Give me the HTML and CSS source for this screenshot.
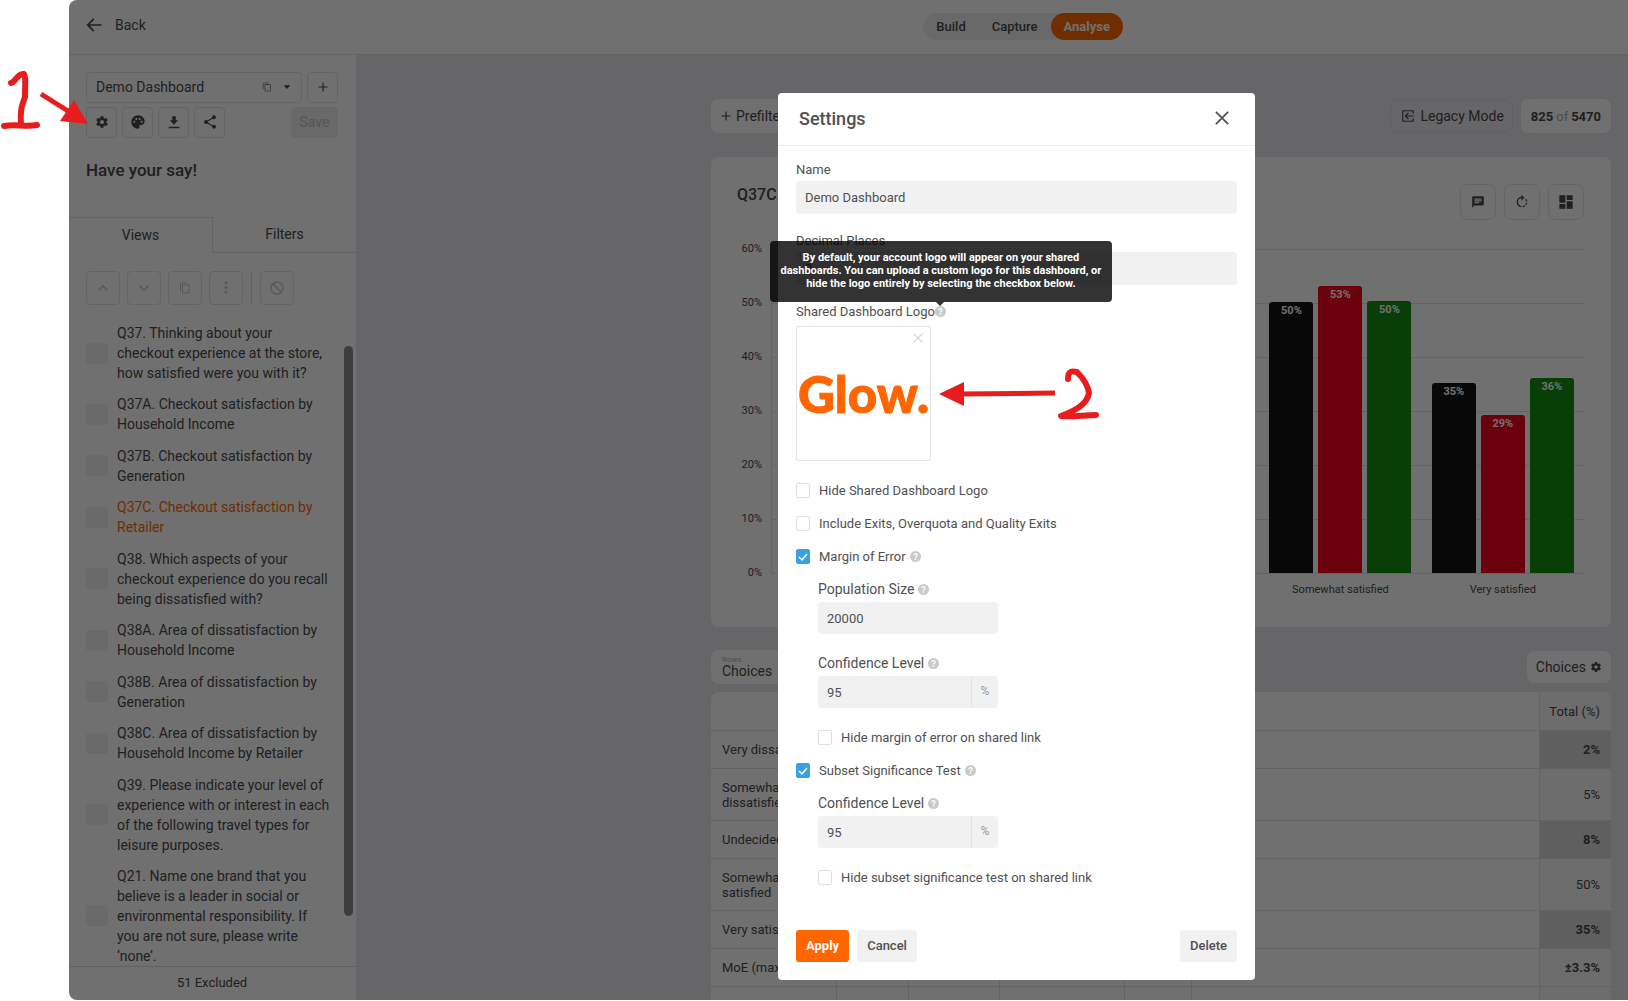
FILE: index.html
```html
<!DOCTYPE html>
<html lang="en">
<head>
    <meta charset="UTF-8">
    <meta name="viewport" content="width=device-width, initial-scale=1.0">
    <title>Demo Dashboard - Settings</title>
    <link rel="stylesheet" href="styles.css">
</head>
<body>
    <!-- ICONS -->
    <svg class="sprite" aria-hidden="true">
        <symbol id="i-gear" viewBox="0 0 24 24"><path fill-rule="evenodd" d="M19.43 12.98c.04-.32.07-.64.07-.98s-.03-.66-.07-.98l2.11-1.65c.19-.15.24-.42.12-.64l-2-3.46c-.12-.22-.39-.3-.61-.22l-2.49 1c-.52-.4-1.08-.73-1.69-.98l-.38-2.65C14.46 2.18 14.25 2 14 2h-4c-.25 0-.46.18-.49.42l-.38 2.65c-.61.25-1.17.59-1.69.98l-2.49-1c-.23-.09-.49 0-.61.22l-2 3.46c-.13.22-.07.49.12.64l2.11 1.65c-.04.32-.07.65-.07.98s.03.66.07.98l-2.11 1.65c-.19.15-.24.42-.12.64l2 3.46c.12.22.39.3.61.22l2.49-1c.52.4 1.08.73 1.69.98l.38 2.65c.03.24.24.42.49.42h4c.25 0 .46-.18.49-.42l.38-2.65c.61-.25 1.17-.59 1.69-.98l2.49 1c.23.09.49 0 .61-.22l2-3.46c.12-.22.07-.49-.12-.64l-2.11-1.65zM12 15.5c-1.93 0-3.5-1.57-3.5-3.5s1.57-3.5 3.5-3.5 3.5 1.57 3.5 3.5-1.57 3.5-3.5 3.5z"/></symbol>
        <symbol id="i-palette" viewBox="0 0 24 24"><path d="M12 2C6.49 2 2 6.49 2 12s4.49 10 10 10c1.38 0 2.5-1.12 2.5-2.5 0-.61-.23-1.2-.64-1.67-.08-.1-.13-.21-.13-.33 0-.28.22-.5.5-.5H16c3.31 0 6-2.69 6-6 0-4.96-4.49-9-10-9zm5.5 11c-.83 0-1.5-.67-1.5-1.5s.67-1.5 1.5-1.5 1.5.67 1.5 1.5-.67 1.5-1.5 1.5zm-3-4c-.83 0-1.5-.67-1.5-1.5S13.67 6 14.5 6s1.5.67 1.5 1.5S15.33 9 14.5 9zM5 11.5c0-.83.67-1.5 1.5-1.5s1.5.67 1.5 1.5S7.33 13 6.5 13 5 12.33 5 11.5zm6-4c0 .83-.67 1.5-1.5 1.5S8 8.33 8 7.5 8.67 6 9.5 6s1.5.67 1.5 1.5z"/></symbol>
        <symbol id="i-download" viewBox="0 0 24 24"><path d="M19 9h-4V2H9v7H5l7 7.5zM3 20h18v2.5H3z"/></symbol>
        <symbol id="i-share" viewBox="0 0 24 24"><path d="M18 16.08c-.76 0-1.44.3-1.96.77L8.91 12.7c.05-.23.09-.46.09-.7s-.04-.47-.09-.7l7.05-4.11c.54.5 1.25.81 2.04.81 1.66 0 3-1.34 3-3s-1.34-3-3-3-3 1.34-3 3c0 .24.04.47.09.7L8.04 9.81C7.5 9.31 6.79 9 6 9c-1.66 0-3 1.34-3 3s1.34 3 3 3c.79 0 1.5-.31 2.04-.81l7.12 4.16c-.05.21-.08.43-.08.65 0 1.61 1.31 2.92 2.92 2.92s2.92-1.31 2.92-2.92-1.31-2.92-2.92-2.92z"/></symbol>
        <symbol id="i-copy" viewBox="0 0 24 24"><path d="M16 1H4c-1.1 0-2 .9-2 2v14h2V3h12V1zm3 4H8c-1.1 0-2 .9-2 2v14c0 1.1.9 2 2 2h11c1.1 0 2-.9 2-2V7c0-1.1-.9-2-2-2zm0 16H8V7h11v14z"/></symbol>
        <symbol id="i-caret" viewBox="0 0 24 24"><path d="M2 7l10 11L22 7z"/></symbol>
        <symbol id="i-plus" viewBox="0 0 24 24"><path d="M21 13.2h-7.8V21h-2.4v-7.8H3v-2.4h7.8V3h2.4v7.8H21z"/></symbol>
        <symbol id="i-back" viewBox="0 0 24 24"><path d="M21 11H6.83l5.59-5.59L11 4l-8 8 8 8 1.41-1.41L6.83 13H21v-2z"/></symbol>
        <symbol id="i-up" viewBox="0 0 24 24"><path d="M12 8l-6 6 1.41 1.41L12 10.83l4.59 4.58L18 14z"/></symbol>
        <symbol id="i-down" viewBox="0 0 24 24"><path d="M16.59 8.59L12 13.17 7.41 8.59 6 10l6 6 6-6z"/></symbol>
        <symbol id="i-more" viewBox="0 0 24 24"><circle cx="12" cy="3" r="2.5"/><circle cx="12" cy="11" r="2.5"/><circle cx="12" cy="19" r="2.5"/></symbol>
        <symbol id="i-block" viewBox="0 0 24 24"><path d="M12 2C6.48 2 2 6.48 2 12s4.48 10 10 10 10-4.48 10-10S17.52 2 12 2zm0 18c-4.42 0-8-3.58-8-8 0-1.85.63-3.55 1.69-4.9L16.9 18.31C15.55 19.37 13.85 20 12 20zm6.31-3.1L7.1 5.69C8.45 4.63 10.15 4 12 4c4.42 0 8 3.58 8 8 0 1.85-.63 3.55-1.69 4.9z"/></symbol>
        <symbol id="i-exit" viewBox="0 0 24 24"><path d="M13.5 7.5L12 6l-6 6 6 6 1.5-1.5L10.2 13H22v-2H10.2zM2 2v20h20v-6h-2v4H4V4h16v4h2V2z"/></symbol>
        <symbol id="i-chat" viewBox="0 0 24 24"><path d="M20 2H4c-1.1 0-2 .9-2 2v18l4-4h14c1.1 0 2-.9 2-2V4c0-1.1-.9-2-2-2zM6 9h12v2H6V9zm8 5H6v-2h8v2zm4-6H6V6h12v2z"/></symbol>
        <symbol id="i-rotate" viewBox="0 0 24 24"><path d="M15.55 5.55L11 1v3.07C7.06 4.56 4 7.92 4 12s3.05 7.44 7 7.93v-2.02c-2.84-.48-5-2.94-5-5.91s2.16-5.43 5-5.91V10l4.55-4.45zM19.93 11c-.17-1.39-.72-2.73-1.62-3.89l-1.42 1.42c.54.75.88 1.6 1.02 2.47h2.02zM13 17.9v2.02c1.39-.17 2.74-.71 3.9-1.61l-1.44-1.44c-.75.54-1.59.89-2.46 1.03zm3.89-2.42l1.42 1.41c.9-1.16 1.45-2.5 1.62-3.89h-2.02c-.14.87-.48 1.72-1.02 2.48z"/></symbol>
        <symbol id="i-dash" viewBox="0 0 24 24"><path d="M2 2h9v11H2zM13 2h9v7h-9zM2 15h9v7H2zM13 11h9v11h-9z"/></symbol>
        <symbol id="i-close" viewBox="0 0 16 16"><path d="M1 1l14 14M15 1L1 15" fill="none" stroke="currentColor" stroke-width="2"/></symbol>
        <symbol id="i-help" viewBox="0 0 12 12"><circle cx="6" cy="6" r="6"/><path d="M4.3 4.6C4.3 2.3 7.7 2.4 7.7 4.5 7.7 5.6 6 5.7 6 7.2" fill="none" stroke="#fff" stroke-width="1.4"/><rect x="5.2" y="8" width="1.6" height="1.5" fill="#fff"/></symbol>
    </svg>

    <div class="app">
        <header class="topbar">
            <a href="#" class="back"><svg class="icon i20"><use href="#i-back"/></svg>Back</a>
            <nav class="steps">
                <a href="#">Build</a>
                <a href="#">Capture</a>
                <a href="#" class="active">Analyse</a>
            </nav>
        </header>

        <div class="columns">
            <!-- SIDEBAR -->
            <aside class="sidebar">
                <div class="picker">
                    <button type="button" class="box picker-name"><span>Demo Dashboard</span><svg class="icon i10 faint"><use href="#i-copy"/></svg><svg class="icon i8"><use href="#i-caret"/></svg></button>
                    <button type="button" class="box square" aria-label="Add dashboard"><svg class="icon i12"><use href="#i-plus"/></svg></button>
                </div>
                <div class="tools">
                    <button type="button" class="box square" aria-label="Settings"><svg class="icon i14"><use href="#i-gear"/></svg></button>
                    <button type="button" class="box square" aria-label="Theme"><svg class="icon i16"><use href="#i-palette"/></svg></button>
                    <button type="button" class="box square" aria-label="Download"><svg class="icon i14"><use href="#i-download"/></svg></button>
                    <button type="button" class="box square" aria-label="Share"><svg class="icon i16"><use href="#i-share"/></svg></button>
                    <button type="button" class="save" disabled>Save</button>
                </div>
                <h2 class="survey">Have your say!</h2>
                <div class="tabs">
                    <button type="button" class="tab on">Views</button>
                    <button type="button" class="tab">Filters</button>
                </div>
                <div class="actions">
                    <button type="button" class="box" aria-label="Move up" disabled><svg class="icon i20"><use href="#i-up"/></svg></button>
                    <button type="button" class="box" aria-label="Move down" disabled><svg class="icon i20"><use href="#i-down"/></svg></button>
                    <button type="button" class="box" aria-label="Copy" disabled><svg class="icon i12"><use href="#i-copy"/></svg></button>
                    <button type="button" class="box" aria-label="More" disabled><svg class="icon i14"><use href="#i-more"/></svg></button>
                    <span class="sep"></span>
                    <button type="button" class="box" aria-label="Exclude" disabled><svg class="icon i16"><use href="#i-block"/></svg></button>
                </div>
                <div class="views">
                    <ul>
                        <li><span class="thumb"></span><a href="#">Q37. Thinking about your checkout experience at the store, how satisfied were you with it?</a></li>
                        <li><span class="thumb"></span><a href="#">Q37A. Checkout satisfaction by Household Income</a></li>
                        <li><span class="thumb"></span><a href="#">Q37B. Checkout satisfaction by Generation</a></li>
                        <li><span class="thumb"></span><a href="#" class="current">Q37C. Checkout satisfaction by Retailer</a></li>
                        <li><span class="thumb"></span><a href="#">Q38. Which aspects of your checkout experience do you recall being dissatisfied with?</a></li>
                        <li><span class="thumb"></span><a href="#">Q38A. Area of dissatisfaction by Household Income</a></li>
                        <li><span class="thumb"></span><a href="#">Q38B. Area of dissatisfaction by Generation</a></li>
                        <li><span class="thumb"></span><a href="#">Q38C. Area of dissatisfaction by Household Income by Retailer</a></li>
                        <li><span class="thumb"></span><a href="#">Q39. Please indicate your level of experience with or interest in each of the following travel types for leisure purposes.</a></li>
                        <li><span class="thumb"></span><a href="#">Q21. Name one brand that you believe is a leader in social or environmental responsibility. If you are not sure, please write ‘none’.</a></li>
                    </ul>
                    <span class="scrollbar"></span>
                </div>
                <div class="excluded">51 Excluded</div>
            </aside>

            <!-- DASHBOARD -->
            <main class="main">
                <div class="toolbar">
                    <button type="button" class="pill"><svg class="icon i12"><use href="#i-plus"/></svg>Prefilter</button>
                    <span class="grow"></span>
                    <button type="button" class="pill outline"><svg class="icon i14"><use href="#i-exit"/></svg>Legacy Mode</button>
                    <span class="pill count"><b>825</b> of <b>5470</b></span>
                </div>

                <section class="card">
                    <div class="card-head">
                        <h3>Q37C. Checkout satisfaction by Retailer</h3>
                        <button type="button" class="box" aria-label="Comment"><svg class="icon i14"><use href="#i-chat"/></svg></button>
                        <button type="button" class="box" aria-label="Rotate"><svg class="icon i16"><use href="#i-rotate"/></svg></button>
                        <button type="button" class="box" aria-label="Layout"><svg class="icon i16"><use href="#i-dash"/></svg></button>
                    </div>
                    <div class="chart">
                        <div class="scale">
                            <span>60%</span><span>50%</span><span>40%</span><span>30%</span><span>20%</span><span>10%</span><span>0%</span>
                        </div>
                        <div class="plot">
                            <div class="group"><div class="bars"></div></div>
                            <div class="group"><div class="bars"></div></div>
                            <div class="group"><div class="bars"></div></div>
                            <div class="group">
                                <div class="bars">
                                    <div class="bar black" style="height:271px">50%</div>
                                    <div class="bar red" style="height:287px">53%</div>
                                    <div class="bar green" style="height:272px">50%</div>
                                </div>
                                <div class="cat">Somewhat satisfied</div>
                            </div>
                            <div class="group">
                                <div class="bars">
                                    <div class="bar black" style="height:190px">35%</div>
                                    <div class="bar red" style="height:158px">29%</div>
                                    <div class="bar green" style="height:195px">36%</div>
                                </div>
                                <div class="cat">Very satisfied</div>
                            </div>
                        </div>
                    </div>
                </section>

                <div class="table-bar">
                    <button type="button" class="pill rows"><small>Rows</small>Choices</button>
                    <span class="grow"></span>
                    <button type="button" class="pill choices">Choices<svg class="icon i12"><use href="#i-gear"/></svg></button>
                </div>
                <table class="results">
                    <colgroup><col class="c-name"><col class="c-a"><col class="c-b"><col class="c-c"><col class="c-d"><col><col class="c-total"></colgroup>
                    <tr class="titles"><th></th><td></td><td></td><td></td><td></td><td></td><th class="total">Total (%)</th></tr>
                    <tr><th>Very dissatisfied</th><td></td><td></td><td></td><td></td><td></td><td class="total shade">2%</td></tr>
                    <tr class="tall"><th>Somewhat dissatisfied</th><td></td><td></td><td></td><td></td><td></td><td class="total">5%</td></tr>
                    <tr><th>Undecided</th><td></td><td></td><td></td><td></td><td></td><td class="total shade">8%</td></tr>
                    <tr class="tall"><th>Somewhat satisfied</th><td></td><td></td><td></td><td></td><td></td><td class="total">50%</td></tr>
                    <tr><th>Very satisfied</th><td></td><td></td><td></td><td></td><td></td><td class="total shade">35%</td></tr>
                    <tr><th>MoE (max)</th><td></td><td></td><td></td><td></td><td></td><td class="total strong">±3.3%</td></tr>
                    <tr><th></th><td></td><td></td><td></td><td></td><td></td><td class="total"></td></tr>
                </table>
            </main>
        </div>

        <!-- SETTINGS MODAL -->
        <div class="overlay">
            <form class="modal">
                <div class="modal-head">
                    <h1>Settings</h1>
                    <button type="button" class="close" aria-label="Close"><svg class="icon i14"><use href="#i-close"/></svg></button>
                </div>
                <div class="modal-body">
                    <div class="field">
                        <label for="name">Name</label>
                        <input type="text" id="name" value="Demo Dashboard">
                    </div>
                    <div class="field">
                        <label for="decimals">Decimal Places</label>
                        <input type="text" id="decimals" value="0">
                    </div>
                    <div class="logo-label">Shared Dashboard Logo <span class="help"><svg class="icon i11"><use href="#i-help"/></svg><span class="tooltip" role="tooltip">By default, your account logo will appear on your shared dashboards. You can upload a custom logo for this dashboard, or hide the logo entirely by selecting the checkbox below.</span></span></div>
                    <div class="logo-box">
                        <span class="logo">Glow.</span>
                        <button type="button" class="remove" aria-label="Remove logo"><svg class="icon i10"><use href="#i-close"/></svg></button>
                    </div>

                    <label class="check"><input type="checkbox">Hide Shared Dashboard Logo</label>
                    <label class="check"><input type="checkbox">Include Exits, Overquota and Quality Exits</label>
                    <label class="check"><input type="checkbox" checked>Margin of Error <svg class="icon i11 help-icon"><use href="#i-help"/></svg></label>
                    <div class="sub">
                        <div class="subfield">
                            <label for="population">Population Size <svg class="icon i11 help-icon"><use href="#i-help"/></svg></label>
                            <input type="text" id="population" value="20000">
                        </div>
                        <div class="subfield">
                            <label for="moe">Confidence Level <svg class="icon i11 help-icon"><use href="#i-help"/></svg></label>
                            <div class="percent"><input type="text" id="moe" value="95"><span>%</span></div>
                        </div>
                        <label class="check"><input type="checkbox">Hide margin of error on shared link</label>
                    </div>
                    <label class="check"><input type="checkbox" checked>Subset Significance Test <svg class="icon i11 help-icon"><use href="#i-help"/></svg></label>
                    <div class="sub">
                        <div class="subfield">
                            <label for="subset">Confidence Level <svg class="icon i11 help-icon"><use href="#i-help"/></svg></label>
                            <div class="percent"><input type="text" id="subset" value="95"><span>%</span></div>
                        </div>
                        <label class="check"><input type="checkbox">Hide subset significance test on shared link</label>
                    </div>

                    <div class="buttons">
                        <button type="button" class="btn primary">Apply</button>
                        <button type="button" class="btn">Cancel</button>
                        <span class="grow"></span>
                        <button type="button" class="btn">Delete</button>
                    </div>
                </div>
            </form>
        </div>
    </div>

    <!-- hand drawn marks -->
    <svg class="mark mark-one" width="92" height="66" viewBox="0 68 92 66" role="img" aria-label="Step 1">
        <path class="pen" d="M11 83C16 82 17 73 24 74C26 76 25 84 25 97C22 105 20 110 21 124M4 126C15 124 26 127 37 125"/>
        <path class="shaft" d="M41 94L68 111"/>
        <path class="head" d="M88 124L74 100L60 121z"/>
    </svg>
    <svg class="mark mark-two" width="162" height="56" viewBox="938 366 162 56" role="img" aria-label="Step 2">
        <path class="pen" d="M1068 379C1068 370 1073 371 1077 372C1083 378 1088 386 1089 393C1087 405 1074 411 1061 416C1073 417 1084 415 1096 415"/>
        <path class="shaft" d="M1055 393L960 394"/>
        <path class="head" d="M939 394L964 382V406z"/>
    </svg>
</body>
</html>
```
FILE: styles.css
```css
* {
    box-sizing: border-box;
}
body {
    margin: 0;
    position: relative;
    background-color: white;
    color: #4a4a4d;
    font-family: Roboto, "Liberation Sans", sans-serif;
    font-size: 14px;
    overflow: hidden;
}
button, input {
    font-family: inherit;
    font-size: inherit;
    color: inherit;
}
button {
    display: flex;
    align-items: center;
    justify-content: center;
    padding: 0;
    border: 0;
    background: none;
}
a {
    color: inherit;
    text-decoration: none;
}
h1, h2, h3, ul {
    margin: 0;
    padding: 0;
}
h1, h2, h3 {
    font-weight: 500;
}
.sprite {
    position: absolute;
    width: 0;
    height: 0;
}
.icon {
    fill: currentColor;
    flex: none;
    width: 14px;
    height: 14px;
}
.i8 { width: 8px; height: 8px; }
.i10 { width: 10px; height: 10px; }
.i11 { width: 11px; height: 11px; }
.i12 { width: 12px; height: 12px; }
.i16 { width: 16px; height: 16px; }
.i20 { width: 20px; height: 20px; }
.grow {
    flex: 1;
}
.faint {
    opacity: .7;
}
.app {
    display: flex;
    flex-direction: column;
    position: relative;
    height: calc(100vh - 1px);
    margin-left: 69px;
    border-radius: 8px 0 0 8px;
    overflow: hidden;
    background-color: #e9e9ec;
}

/* top bar */
.topbar {
    display: flex;
    align-items: center;
    justify-content: space-between;
    flex: none;
    height: 55px;
    padding: 0 505px 2px 15px;
    background-color: white;
    border-bottom: 1px solid #e2e2e4;
}
.back {
    display: flex;
    align-items: center;
    gap: 11px;
    padding-bottom: 2px;
}
.steps {
    display: flex;
    background-color: #f0f0f0;
    border-radius: 14px;
    font-size: 13px;
    font-weight: 500;
    line-height: 27px;
}
.steps a {
    padding: 0 13px;
}
.steps .active {
    background-color: #ff6600;
    border-radius: 14px;
    color: white;
    font-weight: 700;
}
.columns {
    display: flex;
    flex: 1;
    min-height: 0;
}

/* sidebar */
.sidebar {
    display: flex;
    flex-direction: column;
    flex: none;
    width: 287px;
    padding-top: 17px;
    background-color: white;
}
.box {
    border: 1px solid #e4e4e6;
    border-radius: 4px;
}
.square {
    width: 31px;
    height: 31px;
    padding-bottom: 1px;
}
.picker, .tools {
    display: flex;
    gap: 5px;
    padding: 0 18px 0 17px;
}
.picker-name {
    flex: 1;
    height: 31px;
    padding: 0 10px 2px 9px;
    gap: 11px;
}
.picker-name span {
    flex: 1;
    text-align: left;
}
.tools {
    margin-top: 4px;
}
.save {
    width: 47px;
    margin-left: auto;
    padding-bottom: 2px;
    border-radius: 4px;
    background-color: #f0f0f0;
    color: #c2c2c2;
}
.survey {
    margin-top: 22px;
    padding-left: 17px;
    font-size: 17px;
    line-height: 20px;
}
.tabs {
    display: flex;
    margin-top: 37px;
}
.tab {
    flex: 1;
    height: 36px;
    padding-bottom: 2px;
    border-bottom: 1px solid #e2e2e4;
}
.tab.on {
    border-top: 1px solid #e2e2e4;
    border-right: 1px solid #e2e2e4;
    border-bottom: 0;
}
.actions {
    display: flex;
    gap: 7px;
    margin: 18px 17px 0;
    color: #c8c8c8;
}
.actions .box {
    width: 34px;
    height: 34px;
}
.sep {
    width: 1px;
    margin: 0 1px;
    background-color: #dcdcde;
}
.actions button:disabled {
    color: inherit;
}
.views {
    position: relative;
    flex: 1;
    min-height: 0;
    padding: 18px 24px 0 17px;
    overflow: hidden;
}
.views ul {
    display: flex;
    flex-direction: column;
    justify-content: space-between;
    height: 100%;
}
.views li {
    display: flex;
    align-items: center;
    gap: 9px;
    line-height: 20px;
}
.thumb {
    flex: none;
    width: 22px;
    height: 21px;
    border-radius: 3px;
    background-color: #f1f1f1;
}
.current {
    color: #ff6600;
}
.scrollbar {
    position: absolute;
    top: 41px;
    right: 3px;
    bottom: 50px;
    width: 9px;
    border-radius: 5px;
    background-color: #8b8b8b;
}
.excluded {
    flex: none;
    height: 34px;
    border-top: 1px solid #dededf;
    padding-right: 1px;
    text-align: center;
    font-size: 13px;
    line-height: 32px;
}

/* dashboard */
.main {
    flex: 1;
    min-width: 0;
    padding: 44px 17px 0 355px;
}
.toolbar, .table-bar {
    display: flex;
    align-items: center;
    gap: 8px;
}
.pill {
    display: flex;
    align-items: center;
    gap: 4px;
    height: 34px;
    padding: 0 9px;
    border-radius: 8px;
    background-color: white;
    white-space: nowrap;
}
.outline {
    gap: 5px;
    padding: 0 8px 0 10px;
    border: 1px solid #dadadc;
    background: none;
}
.count {
    gap: 3px;
    padding: 0 10px;
    font-size: 13px;
    color: #b0b0b0;
}
.count b {
    color: #4a4a4d;
}
.card {
    margin-top: 24px;
    height: 470px;
    padding: 27px 27px 0 26px;
    border-radius: 8px;
    background-color: white;
}
.card-head {
    display: flex;
    gap: 8px;
}
.card-head h3 {
    flex: 1;
    font-size: 16px;
    line-height: 22px;
}
.card-head .box {
    width: 36px;
    height: 36px;
    border-radius: 8px;
}
.chart {
    display: flex;
    gap: 9px;
    margin-top: 23px;
    font-size: 11px;
}
.scale {
    display: flex;
    flex-direction: column;
    width: 25px;
    text-align: right;
}
.scale span {
    height: 54px;
    line-height: 12px;
}
.plot {
    display: flex;
    flex: 1;
    height: 331px;
    padding-top: 6px;
    border-left: 1px solid #e6e6e6;
    background: repeating-linear-gradient(#e3e3e3 0 1px, transparent 1px 54px) 0 6px no-repeat;
}
.group {
    flex: 1;
}
.bars {
    display: flex;
    justify-content: center;
    align-items: flex-end;
    gap: 5px;
    height: 324px;
}
.bar {
    width: 44px;
    border-radius: 3px 3px 0 0;
    color: white;
    font-weight: 700;
    line-height: 18px;
    text-align: center;
}
.black { background-color: #141414; }
.red { background-color: #f4041c; }
.green { background-color: #158e12; }
.cat {
    margin-top: 10px;
    line-height: 14px;
    text-align: center;
}
.table-bar {
    margin-top: 23px;
}
.rows {
    flex-direction: column;
    align-items: flex-start;
    gap: 0;
    width: 120px;
    padding-left: 11px;
    line-height: 15px;
}
.rows small {
    font-size: 8px;
    line-height: 8px;
    color: #b5b5b5;
}
.choices {
    height: 32px;
    padding: 0 9px;
}
.results {
    width: 100%;
    margin-top: 8px;
    table-layout: fixed;
    border-spacing: 0;
    border-radius: 8px 8px 0 0;
    overflow: hidden;
    background-color: white;
    font-size: 13px;
    line-height: 15px;
}
.c-name { width: 126px; }
.c-a { width: 72px; }
.c-b { width: 91px; }
.c-c { width: 125px; }
.c-d { width: 67px; }
.c-total { width: 71px; }
.results tr {
    height: 38px;
}
.results .titles {
    height: 39px;
}
.results .tall {
    height: 52px;
}
.results th, .results td {
    padding: 0 11px;
    border-right: 1px solid #e2e2e4;
    border-bottom: 1px solid #e2e2e4;
    text-align: left;
    font-weight: 400;
}
.results .total {
    padding-left: 0;
    border-right: 0;
    background-color: #f9f9f9;
    text-align: right;
}
.results .shade {
    background-color: #d8d8d8;
    font-weight: 700;
}
.results .strong {
    font-weight: 700;
}

/* settings modal */
.overlay {
    display: flex;
    justify-content: center;
    align-items: flex-start;
    position: absolute;
    inset: 0;
    padding: 93px 0 0 336px;
    background-color: rgba(0, 0, 0, .56);
}
.modal {
    width: 477px;
    border-radius: 4px;
    background-color: white;
    font-size: 13px;
    color: #505052;
}
.modal-head {
    display: flex;
    align-items: center;
    justify-content: space-between;
    height: 53px;
    padding: 0 26px 2px 21px;
    border-bottom: 1px solid #ededee;
}
.modal-head h1 {
    font-size: 18px;
}
.modal-body {
    padding: 15px 18px 18px;
}
.modal input[type="text"] {
    display: block;
    width: 100%;
    height: 33px;
    padding: 0 9px;
    border: 0;
    border-radius: 4px;
    background-color: #f1f1f1;
}
.field {
    margin-bottom: 18px;
}
.field label {
    display: block;
    margin-bottom: 3px;
    line-height: 17px;
}
.logo-label {
    display: flex;
    align-items: center;
    margin-bottom: 6px;
    line-height: 17px;
}
.help {
    position: relative;
    display: flex;
    color: #cacaca;
}
.help-icon {
    margin-left: 4px;
    color: #cacaca;
}
.tooltip {
    position: absolute;
    bottom: 15px;
    left: -165px;
    width: 342px;
    padding: 10px 6px 12px;
    border-radius: 4px;
    background-color: rgba(0, 0, 0, .8);
    color: white;
    font-size: 11px;
    font-weight: 700;
    line-height: 13px;
    text-align: center;
}
.tooltip::after {
    content: "";
    position: absolute;
    top: 100%;
    left: 166px;
    border: 4px solid transparent;
    border-top-color: rgba(0, 0, 0, .8);
    border-bottom: 0;
}
.logo-box {
    display: flex;
    align-items: center;
    justify-content: center;
    position: relative;
    width: 135px;
    height: 135px;
    margin-bottom: 13px;
    border: 1px solid #e2e5e9;
    border-radius: 2px;
}
.logo {
    color: #ff6600;
    font-family: Lato, sans-serif;
    font-size: 51px;
    font-weight: 900;
    -webkit-text-stroke: 1px #ff6600;
}
.remove {
    position: absolute;
    top: 6px;
    right: 7px;
    color: #d2d2d2;
}
.check {
    display: flex;
    align-items: center;
    height: 33px;
}
.check input {
    appearance: none;
    width: 14px;
    height: 15px;
    margin: 0 9px 0 0;
    border: 1px solid #dfdfe1;
    border-radius: 2px;
    background-color: white;
}
.check input:checked {
    border-color: #3aa0e3;
    background: #3aa0e3 url("data:image/svg+xml,%3Csvg xmlns='http://www.w3.org/2000/svg' viewBox='0 0 12 12'%3E%3Cpath d='M2 6l3 3 5-6' fill='none' stroke='white' stroke-width='1.5'/%3E%3C/svg%3E") center / 12px no-repeat;
}
.sub {
    padding-left: 22px;
}
.subfield {
    width: 180px;
    padding: 8px 0 13px;
}
.subfield label {
    display: flex;
    align-items: center;
    margin-bottom: 4px;
    font-size: 14px;
    line-height: 17px;
}
.modal .subfield input[type="text"] {
    height: 32px;
}
.percent {
    display: flex;
    border-radius: 4px;
    background-color: #f1f1f1;
}
.percent span {
    flex: none;
    width: 27px;
    border-left: 1px solid #e2e2e4;
    color: #999;
    font-size: 12px;
    line-height: 30px;
    text-align: center;
}
.buttons {
    display: flex;
    gap: 8px;
    margin-top: 36px;
}
.btn {
    height: 32px;
    padding: 0 10px 2px;
    border-radius: 3px;
    background-color: #f1f1f1;
    font-weight: 500;
}
.primary {
    background-color: #ff6600;
    color: white;
    font-weight: 700;
}

/* hand drawn marks */
.mark {
    position: absolute;
    fill: none;
    stroke: #e81c1c;
}
.mark-one {
    top: 68px;
    left: 0;
}
.mark-two {
    top: 366px;
    left: 938px;
}
.pen {
    stroke-width: 6;
    stroke-linecap: round;
    stroke-linejoin: round;
}
.shaft {
    stroke-width: 5;
}
.head {
    fill: #e81c1c;
    stroke: none;
}
```
